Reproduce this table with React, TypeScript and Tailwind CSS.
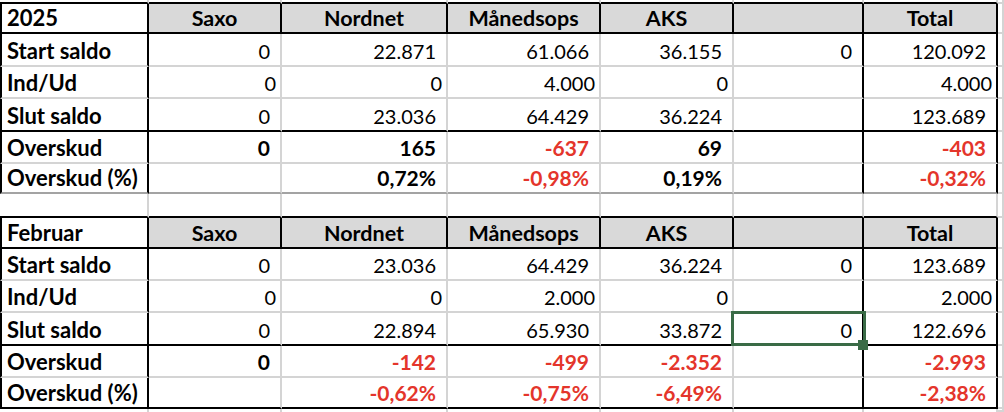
import React from "react";

type V = string | { t: string; red?: boolean; sel?: boolean };

const GRID = "grid grid-cols-[149px_133px_166px_153px_133px_130px_134px_6px]";

const BOTTOM: Record<string, string> = {
  K: "border-b-black",
  G: "border-b-[#d4d4d4]",
  D: "border-b-[#a3a3a3]",
};

const RIGHT = [
  "border-r-[#d4d4d4]",
  "border-r-[#d4d4d4]",
  "border-r-[#d4d4d4]",
  "border-r-[#d4d4d4]",
  "border-r-black",
  "border-r-black",
];

type RowSpec = {
  label: string;
  vals: V[];
  h: string;
  bottom: "K" | "G" | "D";
  bold?: boolean;
  tight?: boolean;
};

function Strip({ h, bottom }: { h: string; bottom: string }) {
  return (
    <div className={`${GRID} ${h}`}>
      {[0, 1, 2, 3, 4, 5, 6].map((i) => (
        <div key={i} className={`border-r-2 border-r-[#d4d4d4] ${bottom}`} />
      ))}
      <div className="border-r-2 border-r-[#d4d4d4] border-b-2 border-b-[#d4d4d4]" />
    </div>
  );
}

function HeaderRow({ label, h, cols }: { label: string; h: string; cols: string[] }) {
  return (
    <div className={`${GRID} ${h}`}>
      <div className="flex items-end pb-[2px] pl-[5px] border-l-2 border-l-black border-r-2 border-r-black border-b-2 border-b-black bg-white font-bold text-[22px]">
        {label}
      </div>
      {cols.map((c, i) => (
        <div
          key={i}
          className="flex items-end justify-center pb-[2px] border-r-2 border-r-black border-b-2 border-b-black bg-[#d9d9d9] font-bold text-[21.5px]"
        >
          {c}
        </div>
      ))}
      <div className="border-r-2 border-r-[#d4d4d4] border-b-2 border-b-[#d4d4d4]" />
    </div>
  );
}

function DataRow({ r }: { r: RowSpec }) {
  const b = BOTTOM[r.bottom];
  return (
    <div className={`${GRID} ${r.h}`}>
      <div className={`flex items-end pb-[2px] pl-[5px] border-l-2 border-l-black border-r-2 border-r-black border-b-2 ${b} font-bold text-[22px]`}>
        {r.label}
      </div>
      {r.vals.map((v, i) => {
        const o = typeof v === "string" ? { t: v } : v;
        return (
          <div
            key={i}
            className={`relative flex items-end justify-end pb-[2px] ${r.tight ? "pr-[4px]" : "pr-[10px]"} border-r-2 ${RIGHT[i]} border-b-2 ${b} ${r.bold ? "font-bold text-[21px]" : "text-[20px]"} ${o.red ? "text-[#e4352b]" : "text-black"}`}
          >
            {o.t}
            {o.sel && (
              <>
                <div className="pointer-events-none absolute -left-[3px] -top-[2px] -right-[4px] -bottom-[2px] z-10 border-[3px] border-[#3a6b46]" />
                <div className="pointer-events-none absolute left-[124px] top-[27px] z-20 h-[10px] w-[10px] bg-[#3a6b46]" />
              </>
            )}
          </div>
        );
      })}
      <div className="border-r-2 border-r-[#d4d4d4] border-b-2 border-b-[#d4d4d4]" />
    </div>
  );
}

const red = (t: string) => ({ t, red: true });

const t1: RowSpec[] = [
  { label: "Start saldo", vals: ["0", "22.871", "61.066", "36.155", "0", "120.092"], h: "h-[33px]", bottom: "G" },
  { label: "Ind/Ud", vals: ["0", "0", "4.000", "0", "", "4.000"], h: "h-[32px]", bottom: "G", tight: true },
  { label: "Slut saldo", vals: ["0", "23.036", "64.429", "36.224", "", "123.689"], h: "h-[33px]", bottom: "K" },
  { label: "Overskud", vals: ["0", "165", red("-637"), "69", "", red("-403")], h: "h-[32px]", bottom: "G", bold: true },
  { label: "Overskud (%)", vals: ["", "0,72%", red("-0,98%"), "0,19%", "", red("-0,32%")], h: "h-[30px]", bottom: "D", bold: true },
];

const t2: RowSpec[] = [
  { label: "Start saldo", vals: ["0", "23.036", "64.429", "36.224", "0", "123.689"], h: "h-[32px]", bottom: "G" },
  { label: "Ind/Ud", vals: ["0", "0", "2.000", "0", "", "2.000"], h: "h-[32px]", bottom: "G", tight: true },
  { label: "Slut saldo", vals: ["0", "22.894", "65.930", "33.872", { t: "0", sel: true }, "122.696"], h: "h-[33px]", bottom: "K" },
  { label: "Overskud", vals: ["0", red("-142"), red("-499"), red("-2.352"), "", red("-2.993")], h: "h-[32px]", bottom: "G", bold: true },
  { label: "Overskud (%)", vals: ["", red("-0,62%"), red("-0,75%"), red("-6,49%"), "", red("-2,38%")], h: "h-[31px]", bottom: "K", bold: true },
];

const COLS = ["Saxo", "Nordnet", "Månedsops", "AKS", "", "Total"];

export default function App() {
  return (
    <div className="h-[412px] w-[1004px] overflow-hidden bg-white text-black font-['Lato',sans-serif] text-[20px] leading-[24px]">
      <Strip h="h-[4px]" bottom="border-b-2 border-b-black" />
      <HeaderRow label="2025" h="h-[30px]" cols={COLS} />
      {t1.map((r) => (
        <DataRow key={"a" + r.label} r={r} />
      ))}
      <Strip h="h-[24px]" bottom="border-b-2 border-b-black" />
      <HeaderRow label="Februar" h="h-[31px]" cols={COLS} />
      {t2.map((r) => (
        <DataRow key={"b" + r.label} r={r} />
      ))}
      <Strip h="h-[3px]" bottom="" />
    </div>
  );
}
